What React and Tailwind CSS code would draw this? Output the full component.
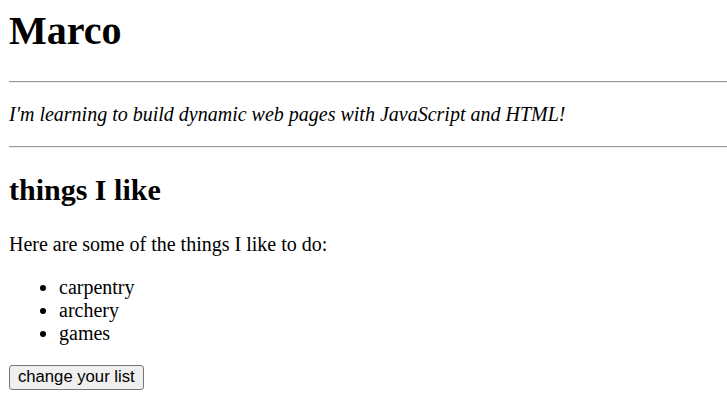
export default function App() {
  return (
    <div className="pl-[9px] text-black bg-white" style={{ fontFamily: '"Liberation Serif", "Times New Roman", serif' }}>
      <h1 className="mt-[8px] mb-[27px] text-[40px] font-bold leading-[46px]">Marco</h1>
      <hr className="h-0 border-0 border-t border-b border-t-[#9a9a9a] border-b-[#eeeeee] my-[10px]" />
      <p className="my-[20px] text-[20px] italic leading-[23px]">
        I'm learning to build dynamic web pages with JavaScript and HTML!
      </p>
      <hr className="h-0 border-0 border-t border-b border-t-[#9a9a9a] border-b-[#eeeeee] my-[10px]" />
      <h2 className="mt-[25px] mb-[25px] text-[30px] font-bold leading-[34.5px]">things I like</h2>
      <p className="my-[20px] text-[20px] leading-[23px]">Here are some of the things I like to do:</p>
      <ul className="my-[20px] pl-[50px] list-disc text-[20px] leading-[23px]">
        <li>carpentry</li>
        <li>archery</li>
        <li>games</li>
      </ul>
      <button
        className="h-[25px] px-[8px] border border-[#767676] rounded-[3px] bg-[#efefef] text-[16.67px] leading-[20px] text-black"
        style={{ fontFamily: '"Liberation Sans", Arial, sans-serif' }}
      >
        change your list
      </button>
    </div>
  );
}
